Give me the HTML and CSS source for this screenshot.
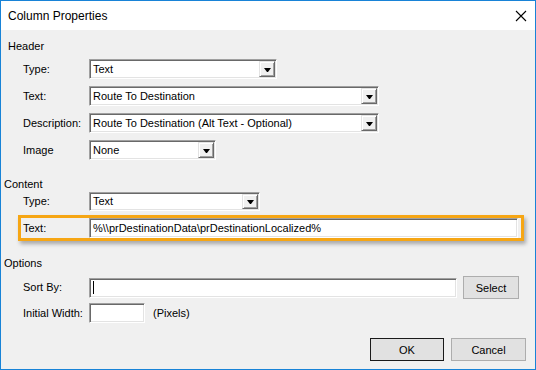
FILE: index.html
```html
<!DOCTYPE html>
<html>
<head>
<meta charset="utf-8">
<title>Column Properties</title>
<link rel="stylesheet" href="styles.css">
</head>
<body>
<div class="window">
  <div class="titlebar">
    <span class="title">Column Properties</span>
    <svg class="close" width="12" height="12" viewBox="0 0 12 12"><path d="M1 1 L11 11 M11 1 L1 11" stroke="#000" stroke-width="1.1" fill="none"/></svg>
  </div>
  <div class="body">
    <div class="section-label first">Header</div>
    <div class="rows rows-header">
      <div class="row"><span class="lbl">Type:</span><div class="combo w-type"><span class="val">Text</span><span class="drop"><i class="arrow"></i></span></div></div>
      <div class="row"><span class="lbl">Text:</span><div class="combo w-wide"><span class="val">Route To Destination</span><span class="drop"><i class="arrow"></i></span></div></div>
      <div class="row"><span class="lbl">Description:</span><div class="combo w-wide"><span class="val">Route To Destination (Alt Text - Optional)</span><span class="drop"><i class="arrow"></i></span></div></div>
      <div class="row"><span class="lbl">Image</span><div class="combo w-image"><span class="val">None</span><span class="drop"><i class="arrow"></i></span></div></div>
    </div>

    <div class="section-label content-label">Content</div>
    <div class="row row-ctype"><span class="lbl">Type:</span><div class="combo combo-short w-ctype"><span class="val">Text</span><span class="drop"><i class="arrow"></i></span></div></div>
    <div class="highlight">
      <span class="lbl">Text:</span><div class="field w-ctext"><span class="val">%\\prDestinationData\prDestinationLocalized%</span></div>
    </div>

    <div class="section-label options-label">Options</div>
    <div class="row row-sort"><span class="lbl">Sort By:</span><div class="field w-sort"><span class="caret"></span></div><button class="btn btn-select">Select</button></div>
    <div class="row row-width"><span class="lbl">Initial Width:</span><div class="field w-px"></div><span class="unit">(Pixels)</span></div>

    <div class="actions">
      <button class="btn btn-default">OK</button>
      <button class="btn">Cancel</button>
    </div>
  </div>
</div>
</body>
</html>
```

FILE: styles.css
```css
html, body {
  margin: 0;
  padding: 0;
  background: #f0f0f0;
}
body {
  font-family: "Liberation Sans", Arial, sans-serif;
  font-size: 11px;
  color: #000;
}
.window {
  width: 536px;
  height: 370px;
  box-sizing: border-box;
  border: 1px solid #1883d7;
  background: #f0f0f0;
  overflow: hidden;
}
.titlebar {
  height: 29px;
  background: #fff;
  display: flex;
  align-items: center;
  justify-content: space-between;
  padding: 0 7px 0 7px;
}
.title {
  font-size: 12px;
  color: #000;
}
.close {
  display: block;
  margin-right: 1px;
}
.body {
  display: flex;
  flex-direction: column;
}
.section-label {
  line-height: 13px;
  height: 13px;
  padding-left: 3px;
}
.section-label.first {
  margin-top: 10px;
  padding-left: 7px;
}
.content-label { margin-top: 18px; }
.options-label { margin-top: 16px; }

.rows {
  display: flex;
  flex-direction: column;
  gap: 7px;
}
.rows-header { margin-top: 6px; }

.row {
  display: flex;
  align-items: center;
  height: 20px;
  margin-left: 22px;
}
.lbl {
  width: 66px;
  flex: none;
  line-height: 13px;
}
.row-ctype { margin-top: 1px; height: 19px; }
.row-sort { margin-top: 6px; height: 23px; }
.row-width { margin-top: 4px; }

.combo, .field {
  display: flex;
  align-items: center;
  height: 20px;
  box-sizing: border-box;
  background: #fff;
  border: 1px solid;
  border-color: #a0a0a0 #fff #fff #a0a0a0;
  box-shadow: inset 1px 1px 0 #696969, inset -1px -1px 0 #e3e3e3;
  padding: 1px;
  flex: none;
}
.combo-short { height: 19px; }
.val {
  flex: 1;
  padding-left: 2px;
  white-space: nowrap;
  overflow: hidden;
  line-height: 13px;
}
.drop {
  width: 16px;
  height: 16px;
  flex: none;
  box-sizing: border-box;
  background: #f0f0f0;
  border: 1px solid;
  border-color: #e3e3e3 #696969 #696969 #e3e3e3;
  box-shadow: inset 1px 1px 0 #fff, inset -1px -1px 0 #a0a0a0;
  display: flex;
  align-items: center;
  justify-content: center;
}
.combo-short .drop { height: 15px; }
.arrow {
  display: block;
  width: 1px;
  height: 0;
  border-left: 3px solid transparent;
  border-right: 3px solid transparent;
  border-top: 4px solid #000;
  margin-top: 1px;
}
.w-type { width: 188px; }
.w-wide { width: 290px; }
.w-image { width: 127px; }
.w-ctype { width: 171px; }
.w-ctext { width: 429px; }
.w-sort { width: 368px; }
.w-px { width: 56px; }

.caret {
  display: block;
  width: 1px;
  height: 13px;
  background: #000;
  margin-left: 2px;
}

.highlight {
  display: flex;
  align-items: flex-start;
  margin-top: 4px;
  margin-left: 17px;
  width: 506px;
  height: 26px;
  box-sizing: border-box;
  border: 3px solid #f6a614;
  padding-left: 2px;
  box-shadow: 2px 3px 4px rgba(0, 0, 0, 0.3);
}
.highlight .lbl {
  line-height: 20px;
}

.unit {
  margin-left: 8px;
  line-height: 13px;
}

.btn {
  font-family: "Liberation Sans", Arial, sans-serif;
  font-size: 11px;
  color: #000;
  width: 75px;
  height: 23px;
  box-sizing: border-box;
  background: #e1e1e1;
  border: 1px solid #adadad;
  padding: 0;
  margin: 0;
  display: flex;
  align-items: center;
  justify-content: center;
}
.btn-select {
  width: 56px;
  margin-left: 6px;
}
.btn-default {
  width: 74px;
  border-color: #1a1a1a;
}
.actions {
  display: flex;
  justify-content: flex-end;
  gap: 7px;
  margin-top: 15px;
  padding-right: 9px;
}
```
